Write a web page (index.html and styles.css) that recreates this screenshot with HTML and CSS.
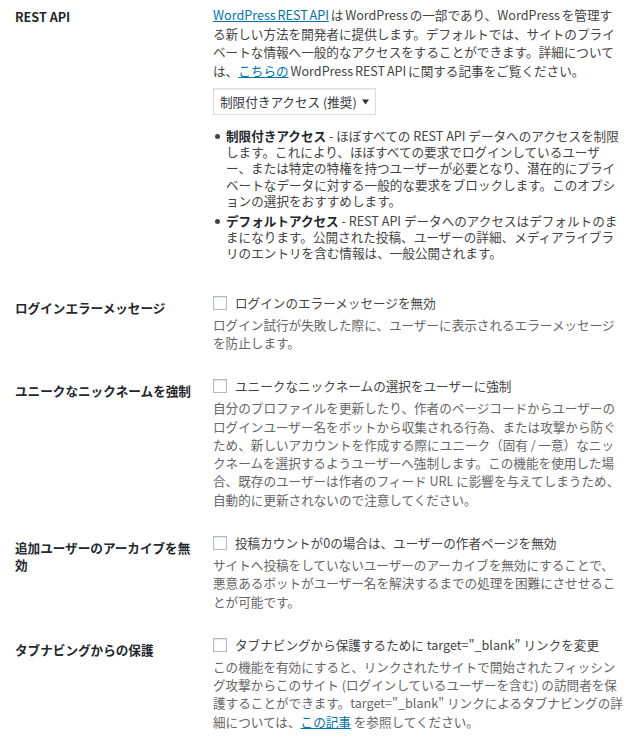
FILE: index.html
```html
<!DOCTYPE html>
<html lang="ja">
<head>
<meta charset="utf-8">
<title>設定</title>
<link rel="stylesheet" href="styles.css">
</head>
<body>
<div class="form">
  <div class="row first">
    <div class="th">REST API</div>
    <div class="td">
      <p class="intro"><a href="#">WordPress REST API</a> は WordPress の一部であり、WordPress を管理する新しい方法を開発者に提供します。デフォルトでは、サイトのプライベートな情報へ一般的なアクセスをすることができます。詳細については、<a href="#">こちらの</a> WordPress REST API に関する記事をご覧ください。</p>
      <div class="select"><span>制限付きアクセス (推奨)</span><svg class="arrow" width="7" height="6" viewBox="0 0 7 6"><path d="M0 0.5h7L3.5 5.5z" fill="#333"/></svg></div>
      <ul class="options">
        <li><strong>制限付きアクセス</strong> - ほぼすべての REST API データへのアクセスを制限します。これにより、ほぼすべての要求でログインしているユーザー、または特定の特権を持つユーザーが必要となり、潜在的にプライベートなデータに対する一般的な要求をブロックします。このオプションの選択をおすすめします。</li>
        <li><strong>デフォルトアクセス</strong> - REST API データへのアクセスはデフォルトのままになります。公開された投稿、ユーザーの詳細、メディアライブラリのエントリを含む情報は、一般公開されます。</li>
      </ul>
    </div>
  </div>
  <div class="row">
    <div class="th">ログインエラーメッセージ</div>
    <div class="td">
      <label class="check"><span class="box"></span><span>ログインのエラーメッセージを無効</span></label>
      <p class="description">ログイン試行が失敗した際に、ユーザーに表示されるエラーメッセージを防止します。</p>
    </div>
  </div>
  <div class="row">
    <div class="th">ユニークなニックネームを強制</div>
    <div class="td">
      <label class="check"><span class="box"></span><span>ユニークなニックネームの選択をユーザーに強制</span></label>
      <p class="description">自分のプロファイルを更新したり、作者のページコードからユーザーのログインユーザー名をボットから収集される行為、または攻撃から防ぐため、新しいアカウントを作成する際にユニーク（固有 / 一意）なニックネームを選択するようユーザーへ強制します。この機能を使用した場合、既存のユーザーは作者のフィード URL に影響を与えてしまうため、自動的に更新されないので注意してください。</p>
    </div>
  </div>
  <div class="row">
    <div class="th">追加ユーザーのアーカイブを無効</div>
    <div class="td">
      <label class="check"><span class="box"></span><span>投稿カウントが0の場合は、ユーザーの作者ページを無効</span></label>
      <p class="description">サイトへ投稿をしていないユーザーのアーカイブを無効にすることで、悪意あるボットがユーザー名を解決するまでの処理を困難にさせせることが可能です。</p>
    </div>
  </div>
  <div class="row">
    <div class="th">タブナビングからの保護</div>
    <div class="td">
      <label class="check"><span class="box"></span><span>タブナビングから保護するために target="_blank" リンクを変更</span></label>
      <p class="description">この機能を有効にすると、リンクされたサイトで開始されたフィッシング攻撃からこのサイト (ログインしているユーザーを含む) の訪問者を保護することができます。target="_blank" リンクによるタブナビングの詳細については、<a href="#">この記事</a> を参照してください。</p>
    </div>
  </div>
</div>
</body>
</html>
```

FILE: styles.css
```css
html, body {
  margin: 0;
  padding: 0;
  background: #ffffff;
}
body {
  font-family: "Noto Sans CJK JP", sans-serif;
  font-size: 12.6px;
  color: #444;
}
.form {
  padding: 0 12px 0 15px;
}
.row {
  display: grid;
  grid-template-columns: 198px 1fr;
}
.th {
  color: #23282d;
  font-weight: 700;
  line-height: 17px;
  padding: 17px 12px 0 0;
}
.td {
  padding: 12px 0 13px 0;
}
.row.first .th {
  padding-top: 8px;
}
.row.first .td {
  padding-top: 6px;
  padding-bottom: 16px;
}
a {
  color: #0073aa;
  text-decoration: underline;
}
p {
  margin: 0;
}
.intro {
  line-height: 18.5px;
  word-spacing: -1px;
}
.select {
  display: inline-flex;
  align-items: center;
  justify-content: space-between;
  box-sizing: border-box;
  width: 163px;
  height: 27px;
  margin-top: 8px;
  padding: 0 6px 0 6px;
  border: 1px solid #ddd;
  box-shadow: inset 0 1px 2px rgba(0, 0, 0, 0.07);
  background: #fff;
  color: #32373c;
}
.arrow {
  display: block;
}
.options {
  list-style: none;
  margin: 13px 0 0 0;
  padding: 0;
}
.options li {
  position: relative;
  padding-left: 13px;
  line-height: 16.2px;
  margin-bottom: 4px;
}
.options li::before {
  content: "";
  position: absolute;
  left: 2px;
  top: 6px;
  width: 5px;
  height: 5px;
  border-radius: 50%;
  background: #444;
}
.options strong {
  color: #23282d;
  font-weight: 700;
}
.check {
  display: flex;
  align-items: center;
  line-height: 18px;
}
.box {
  flex: none;
  box-sizing: border-box;
  width: 14px;
  height: 14px;
  margin-right: 8px;
  border: 1px solid #b4b9be;
  background: #fff;
  box-shadow: inset 0 1px 2px rgba(0, 0, 0, 0.1);
}
.description {
  margin-top: 4px;
  color: #666;
  line-height: 18.3px;
}
```
